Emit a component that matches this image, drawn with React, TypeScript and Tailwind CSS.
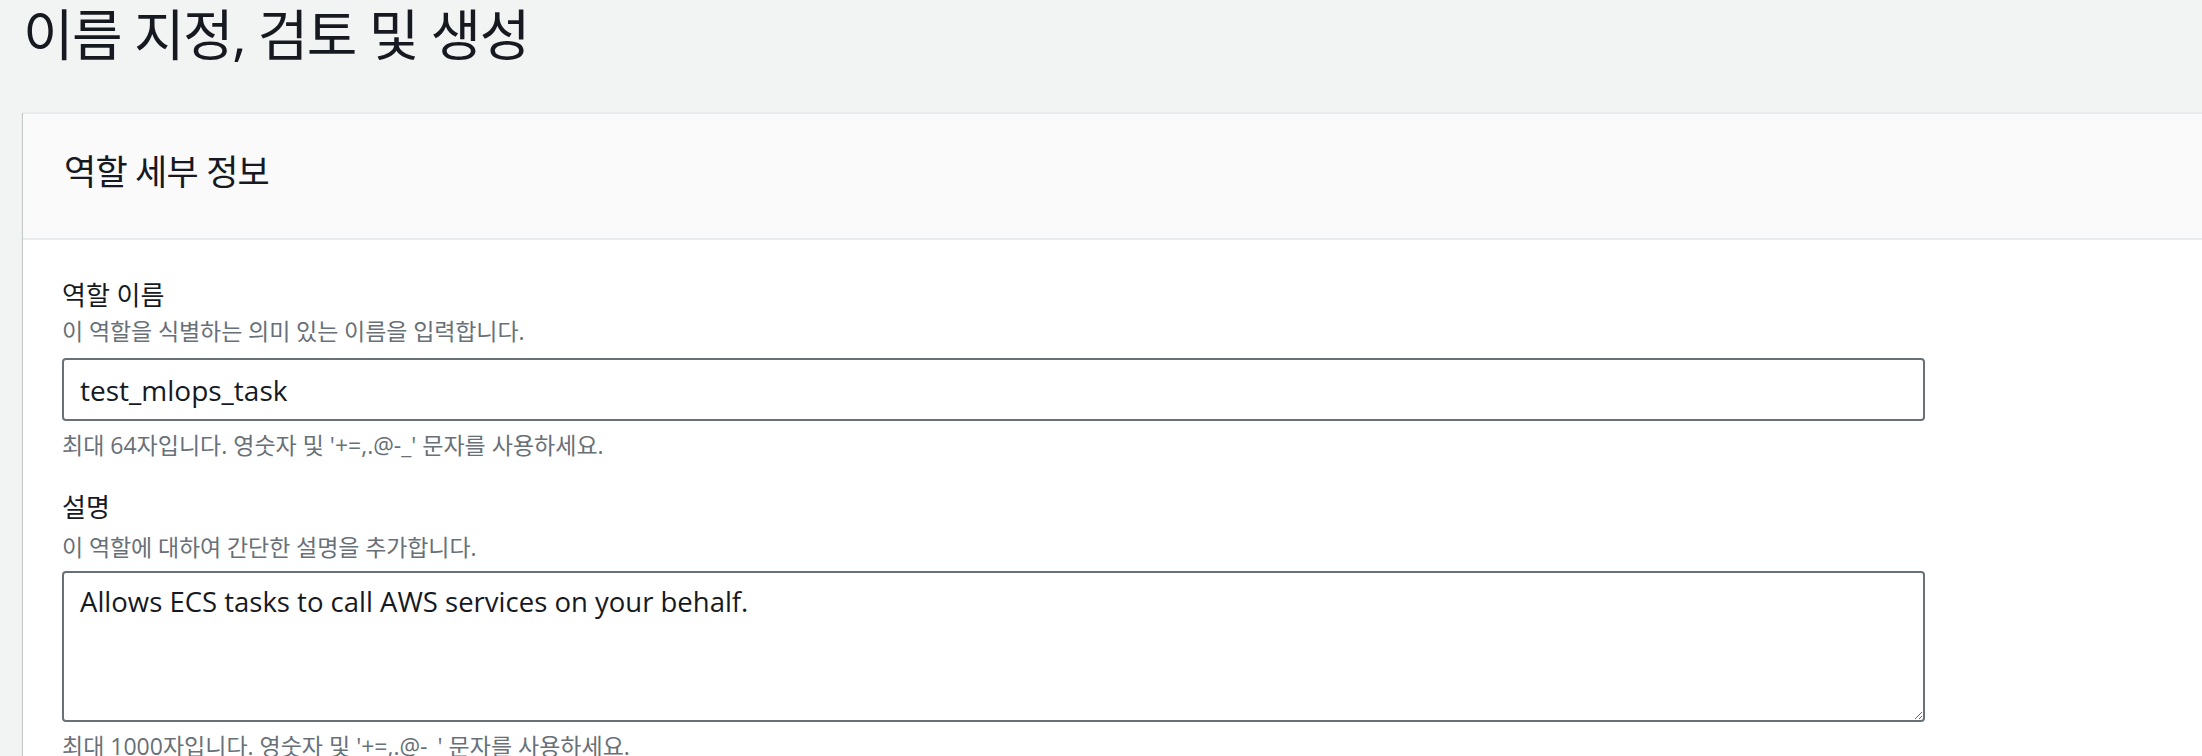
export default function App() {
  return (
    <div className="min-h-screen bg-[#f2f3f3] text-[#16191f] font-['Open_Sans','Noto_Sans_CJK_KR',sans-serif]">
      {/* Page title */}
      <h1 className="pl-[23px] text-[55px] leading-[68px] tracking-[-1.5px] font-normal">이름 지정, 검토 및 생성</h1>

      {/* Panel */}
      <div className="mt-[44px] ml-[23px] bg-white border-t-2 border-[#eaeded] shadow-[0_1px_1px_0_rgba(0,28,36,0.3),-1px_1px_1px_0_rgba(0,28,36,0.15)]">
        <div className="h-[126px] pt-[36px] pl-[41px] bg-[#fafafa] border-b-2 border-[#eaeded]">
          <h2 className="text-[35px] leading-[44px] tracking-[-0.8px] font-normal">역할 세부 정보</h2>
        </div>

        <div className="pl-[39px] pt-[40px] pb-[40px]">
          {/* Role name */}
          <div className="text-[26px] leading-[30px]">역할 이름</div>
          <div className="mt-[7px] text-[23px] leading-[28px] tracking-[-0.1px] text-[#687078]">이 역할을 식별하는 의미 있는 이름을 입력합니다.</div>
          <input
            defaultValue="test_mlops_task"
            className="mt-[13px] block w-[1863px] h-[63px] px-[16px] border-2 border-[#687078] rounded-[4px] bg-white text-[28px] text-[#16191f] outline-none"
          />
          <div className="mt-[10px] text-[23px] leading-[28px] text-[#687078]">최대 64자입니다. 영숫자 및 '+=,.@-_' 문자를 사용하세요.</div>

          {/* Description */}
          <div className="mt-[33px] text-[26px] leading-[30px]">설명</div>
          <div className="mt-[11px] text-[23px] leading-[28px] tracking-[-0.1px] text-[#687078]">이 역할에 대하여 간단한 설명을 추가합니다.</div>
          <textarea
            defaultValue="Allows ECS tasks to call AWS services on your behalf."
            className="mt-[10px] block w-[1863px] h-[151px] px-[16px] pt-[11px] border-2 border-[#687078] rounded-[4px] bg-white text-[27.5px] leading-[36px] text-[#16191f] outline-none"
          />
          <div className="mt-[10px] text-[23px] leading-[28px] text-[#687078]">최대 1000자입니다. 영숫자 및 '+=,.@-_' 문자를 사용하세요.</div>
        </div>
      </div>
    </div>
  );
}
